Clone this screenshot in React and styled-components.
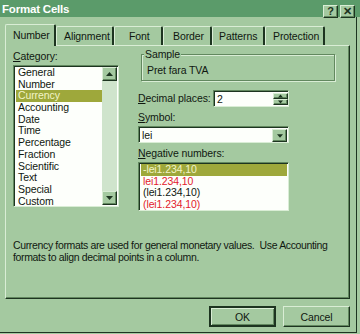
import React from "react";
import styled, { createGlobalStyle, css } from "styled-components";

const C = {
  face: "#a4c9a0",
  title: "#5b9b6a",
  dark: "#1d3420",
  shadow: "#62885f",
  light: "#d9edd5",
  white: "#fdfffb",
  track: "#cfe4cc",
  select: "#9ea83b",
  selectText: "#f2f4c8",
  red: "#e3212c",
  text: "#101810",
};

const GlobalStyle = createGlobalStyle`
  * { box-sizing: border-box; }
  html, body {
    margin: 0;
    padding: 0;
    background: ${C.face};
  }
  body {
    font-family: "Liberation Sans", Arial, sans-serif;
    font-size: 10.5px;
    letter-spacing: -0.1px;
    color: ${C.text};
  }
`;

const raised = css`
  border-top: 1px solid ${C.light};
  border-left: 1px solid ${C.light};
  border-right: 1px solid ${C.dark};
  border-bottom: 1px solid ${C.dark};
  box-shadow: inset -1px -1px 0 ${C.shadow};
`;

const sunken = css`
  border-top: 1px solid ${C.shadow};
  border-left: 1px solid ${C.shadow};
  border-right: 1px solid ${C.light};
  border-bottom: 1px solid ${C.light};
  box-shadow: inset 1px 1px 0 ${C.dark};
`;

const Dialog = styled.div`
  width: 360px;
  height: 334px;
  display: flex;
  flex-direction: column;
  background: ${C.face};
`;

const TitleBar = styled.div`
  height: 17px;
  display: flex;
  align-items: center;
  justify-content: space-between;
  padding: 0 5px 0 2px;
  background: ${C.title};
`;

const Title = styled.span`
  color: #ffffff;
  font-weight: bold;
  font-size: 11.5px;
  letter-spacing: -0.2px;
`;

const CapButtons = styled.div`
  display: flex;
  gap: 2px;
  margin-top: 5px;
`;

const CapButton = styled.div`
  ${raised};
  width: 15px;
  height: 13px;
  display: flex;
  align-items: center;
  justify-content: center;
  background: ${C.face};
  font-weight: bold;
  font-size: 11px;
  line-height: 1;
  color: ${C.dark};
`;

const Frame = styled.div`
  flex: 1;
  display: flex;
  flex-direction: column;
  padding: 0 6px 0 5px;
  border-right: 1px solid ${C.dark};
  border-bottom: 1px solid ${C.dark};
  margin-right: 3px;
  margin-bottom: 1px;
`;

const TabStrip = styled.div`
  height: 28px;
  display: flex;
  align-items: flex-end;
`;

const Tab = styled.div`
  width: ${(p) => p.$w}px;
  height: ${(p) => (p.$active ? 22 : 19)}px;
  margin-bottom: ${(p) => (p.$active ? -1 : 0)}px;
  display: flex;
  align-items: center;
  padding-left: ${(p) => p.$pad}px;
  padding-bottom: ${(p) => (p.$active ? 2 : 0)}px;
  border-top: 1px solid ${C.light};
  border-left: 1px solid ${C.light};
  border-right: 2px solid ${C.dark};
  border-radius: 2px 2px 0 0;
  background: ${C.face};
  position: relative;
  z-index: ${(p) => (p.$active ? 2 : 1)};
`;

const Panel = styled.div`
  ${raised};
  height: 254px;
  display: flex;
  flex-direction: column;
  padding: 4px 0 0 7px;
`;

const Columns = styled.div`
  display: flex;
  gap: 19px;
`;

const LeftCol = styled.div`
  width: 106px;
  display: flex;
  flex-direction: column;
`;

const RightCol = styled.div`
  width: 200px;
  display: flex;
  flex-direction: column;
`;

const Label = styled.div`
  height: 13px;
  line-height: 13px;
  white-space: nowrap;
  margin-top: ${(p) => p.$mt || 0}px;
  margin-bottom: ${(p) => p.$mb || 0}px;

  u {
    text-decoration: underline;
  }
`;

const ListBox = styled.div`
  ${sunken};
  width: ${(p) => p.$w}px;
  height: ${(p) => p.$h}px;
  background: ${C.white};
  display: flex;
  padding: 1px 1px 1px 2px;
  overflow: hidden;
`;

const Items = styled.div`
  flex: 1;
  display: flex;
  flex-direction: column;
`;

const Item = styled.div`
  height: 11.7px;
  line-height: 11.7px;
  padding-left: 2px;
  white-space: nowrap;
  color: ${(p) => (p.$selected ? C.selectText : p.$red ? C.red : C.text)};
  background: ${(p) => (p.$selected ? C.select : "transparent")};
`;

const ScrollBar = styled.div`
  width: 15px;
  display: flex;
  flex-direction: column;
  justify-content: space-between;
  background: ${C.track};
`;

const ArrowBtn = styled.div`
  ${raised};
  width: 15px;
  height: ${(p) => p.$h || 14}px;
  background: ${C.face};
  display: flex;
  align-items: center;
  justify-content: center;
`;

const Group = styled.div`
  width: 194px;
  height: 27px;
  margin: 4px 0 0 3px;
  border: 1px solid ${C.shadow};
  box-shadow: 1px 1px 0 ${C.light}, inset 1px 1px 0 ${C.light};
  position: relative;
  padding: 9px 0 0 5px;
`;

const Legend = styled.span`
  position: absolute;
  top: -7px;
  left: 2px;
  padding: 0 1px;
  background: ${C.face};
  line-height: 13px;
`;

const Row = styled.div`
  display: flex;
  align-items: center;
  justify-content: space-between;
  width: 151px;
  margin-top: ${(p) => p.$mt || 0}px;
`;

const Field = styled.div`
  ${sunken};
  width: ${(p) => p.$w}px;
  height: ${(p) => p.$h}px;
  background: ${C.white};
  display: flex;
  align-items: stretch;
  padding: 2px 1px 1px 3px;
  margin-top: ${(p) => p.$mt || 0}px;
`;

const FieldText = styled.span`
  flex: 1;
  display: flex;
  align-items: center;
`;

const SpinCol = styled.div`
  display: flex;
  flex-direction: column;
  width: 14px;
`;

const Description = styled.div`
  margin-top: 29px;
  line-height: 11.5px;
  letter-spacing: -0.35px;
  white-space: nowrap;
`;

const ButtonRow = styled.div`
  display: flex;
  justify-content: flex-end;
  gap: 7px;
  padding: 7px 0 0 0;
`;

const PushButton = styled.div`
  ${raised};
  width: 67px;
  height: 21px;
  display: flex;
  align-items: center;
  justify-content: center;
  background: ${C.face};
  ${(p) =>
    p.$default &&
    css`
      border-width: 2px;
      border-color: ${C.dark};
      box-shadow: inset 1px 1px 0 ${C.light}, inset -1px -1px 0 ${C.shadow};
    `}
`;

const Arrow = ({ dir = "down", size = 7 }) => (
  <svg width={size} height={4} viewBox="0 0 7 4">
    {dir === "down" ? (
      <path d="M0 0h7L3.5 4z" fill={C.dark} />
    ) : (
      <path d="M0 4h7L3.5 0z" fill={C.dark} />
    )}
  </svg>
);

const tabs = [
  { name: "Number", w: 51, pad: 7 },
  { name: "Alignment", w: 58, pad: 7 },
  { name: "Font", w: 49, pad: 14 },
  { name: "Border", w: 49, pad: 9 },
  { name: "Patterns", w: 53, pad: 6 },
  { name: "Protection", w: 60, pad: 7 },
];

const categories = [
  "General",
  "Number",
  "Currency",
  "Accounting",
  "Date",
  "Time",
  "Percentage",
  "Fraction",
  "Scientific",
  "Text",
  "Special",
  "Custom",
];

const negatives = [
  { text: "-lei1.234,10", selected: true },
  { text: "lei1.234,10", red: true },
  { text: "(lei1.234,10)" },
  { text: "(lei1.234,10)", red: true },
];

export default function App() {
  return (
    <>
      <GlobalStyle />
      <Dialog>
        <TitleBar>
          <Title>Format Cells</Title>
          <CapButtons>
            <CapButton>?</CapButton>
            <CapButton>✕</CapButton>
          </CapButtons>
        </TitleBar>
        <Frame>
          <TabStrip>
            {tabs.map((t, i) => (
              <Tab key={t.name} $w={t.w} $pad={t.pad} $active={i === 0}>
                {t.name}
              </Tab>
            ))}
          </TabStrip>
          <Panel>
            <Columns>
              <LeftCol>
                <Label $mb={2}>
                  <u>C</u>ategory:
                </Label>
                <ListBox $w={106} $h={142}>
                  <Items>
                    {categories.map((c) => (
                      <Item key={c} $selected={c === "Currency"}>
                        {c}
                      </Item>
                    ))}
                  </Items>
                  <ScrollBar>
                    <ArrowBtn>
                      <Arrow dir="up" />
                    </ArrowBtn>
                    <ArrowBtn>
                      <Arrow />
                    </ArrowBtn>
                  </ScrollBar>
                </ListBox>
              </LeftCol>
              <RightCol>
                <Group>
                  <Legend>Sample</Legend>
                  Pret fara TVA
                </Group>
                <Row $mt={9}>
                  <Label>
                    <u>D</u>ecimal places:
                  </Label>
                  <Field $w={76} $h={17}>
                    <FieldText>2</FieldText>
                    <SpinCol>
                      <ArrowBtn $h={7}>
                        <Arrow dir="up" size={5} />
                      </ArrowBtn>
                      <ArrowBtn $h={7}>
                        <Arrow size={5} />
                      </ArrowBtn>
                    </SpinCol>
                  </Field>
                </Row>
                <Label $mt={4}>
                  <u>S</u>ymbol:
                </Label>
                <Field $w={151} $h={17} $mt={2}>
                  <FieldText>lei</FieldText>
                  <ArrowBtn $h={13}>
                    <Arrow size={6} />
                  </ArrowBtn>
                </Field>
                <Label $mt={4} $mb={2}>
                  <u>N</u>egative numbers:
                </Label>
                <ListBox $w={151} $h={49}>
                  <Items>
                    {negatives.map((n, i) => (
                      <Item key={i} $selected={n.selected} $red={n.red}>
                        {n.text}
                      </Item>
                    ))}
                  </Items>
                </ListBox>
              </RightCol>
            </Columns>
            <Description>
              Currency formats are used for general monetary values.&nbsp; Use
              Accounting
              <br />
              formats to align decimal points in a column.
            </Description>
          </Panel>
          <ButtonRow>
            <PushButton $default>OK</PushButton>
            <PushButton>Cancel</PushButton>
          </ButtonRow>
        </Frame>
      </Dialog>
    </>
  );
}
